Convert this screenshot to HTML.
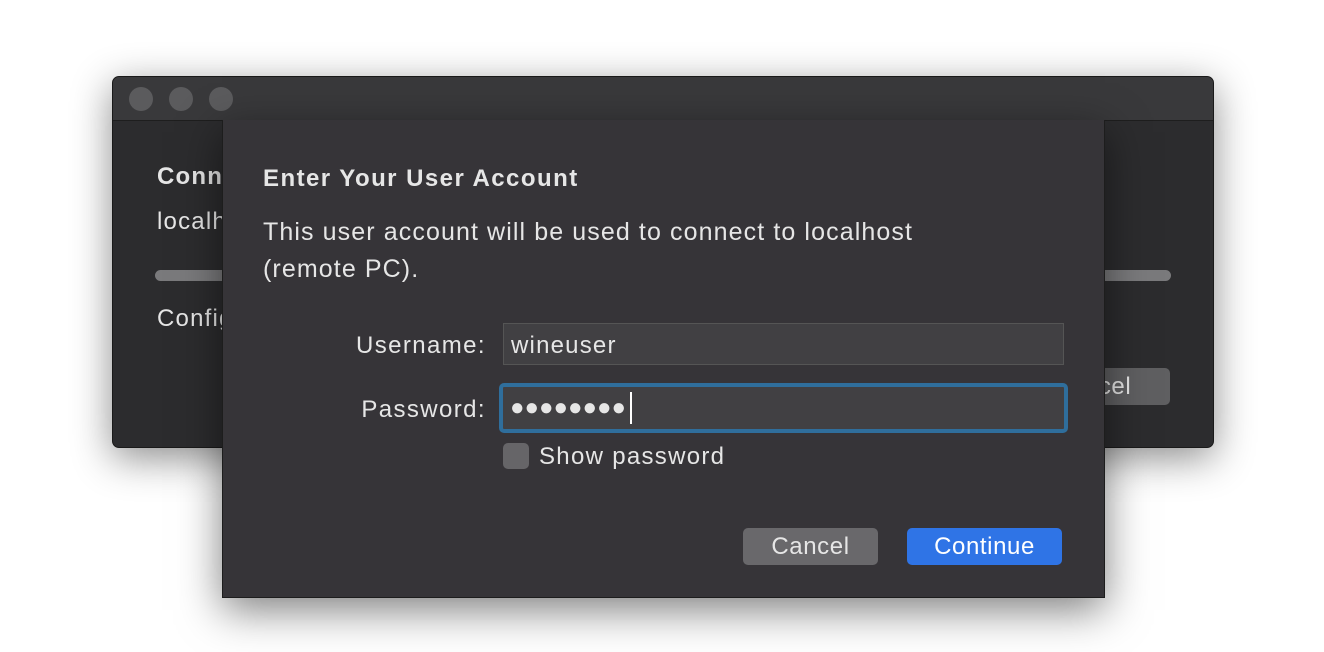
<!DOCTYPE html>
<html><head><style>
body{margin:0;width:1324px;height:652px;background:#fff;position:relative;overflow:hidden;font-family:"Liberation Sans",sans-serif;color:#e6e6e6}
.a{position:absolute}
#win{left:112px;top:76px;width:1100px;height:370px;background:#2c2c2e;border:1px solid #1a1a1a;border-radius:7px;box-shadow:0 10px 40px rgba(0,0,0,.45);overflow:hidden}
#tb{left:0;top:0;width:1100px;height:43px;background:#39393b;border-bottom:1px solid #1e1e1e}
.dot{width:24px;height:24px;border-radius:50%;background:#5b5b5d;top:10px}
#dlg{left:222px;top:120px;width:881px;height:477px;background:#363438;border:1px solid #1d1d1d;border-top:none;box-shadow:0 12px 40px rgba(0,0,0,.5)}
.t{font-size:24px;white-space:nowrap;letter-spacing:1.2px}
.fld{background:#414043;border:1px solid #555}
.btn{border-radius:5px;font-size:24px;text-align:center;line-height:37px;height:37px;letter-spacing:0.6px}
</style></head><body>
<div id="win" class="a">
 <div id="tb" class="a"></div>
 <div class="a dot" style="left:16px"></div>
 <div class="a dot" style="left:56px"></div>
 <div class="a dot" style="left:96px"></div>
 <div class="a t" style="left:44px;top:86px;font-weight:bold">Connecting</div>
 <div class="a t" style="left:44px;top:131px">localhost</div>
 <div class="a" style="left:42px;top:193px;width:1016px;height:11px;border-radius:6px;background:#7a7a7c"></div>
 <div class="a t" style="left:44px;top:228px">Configuring</div>
 <div class="a btn" style="left:960px;top:291px;width:97px;background:#5f5f61"></div>
 <div class="a t" style="left:940px;top:296px;letter-spacing:0.6px">Cancel</div>
</div>
<div id="dlg" class="a">
 <div class="a t" style="left:40px;top:45px;font-weight:bold;font-size:24px;letter-spacing:1.45px">Enter Your User Account</div>
 <div class="a t" style="left:40px;top:94px;font-size:25px;line-height:37px;letter-spacing:1.1px">This user account will be used to connect to localhost<br>(remote PC).</div>
 <div class="a t" style="right:618px;top:212px;font-size:24px;letter-spacing:1.4px">Username:</div>
 <div class="a fld" style="left:280px;top:203px;width:559px;height:40px"></div>
 <div class="a t" style="left:288px;top:212px;font-size:24px">wineuser</div>
 <div class="a t" style="right:618px;top:276px;font-size:24px;letter-spacing:1.4px">Password:</div>
 <div class="a" style="left:276px;top:263px;width:561px;height:42px;border:4px solid #2f6e9c;border-radius:5px;background:#414043"></div>
 <div class="a t" style="left:287px;top:274px;font-size:24px;letter-spacing:0px">●●●●●●●●</div>
 <div class="a" style="left:407px;top:272px;width:2px;height:32px;background:#fff"></div>
 <div class="a" style="left:280px;top:323px;width:26px;height:26px;border-radius:5px;background:#666568"></div>
 <div class="a t" style="left:316px;top:323px;font-size:24px;letter-spacing:1.3px">Show password</div>
 <div class="a btn" style="left:520px;top:408px;width:135px;background:#69686b">Cancel</div>
 <div class="a btn" style="left:684px;top:408px;width:155px;background:#2f74e6;color:#fff">Continue</div>
</div>
</body></html>
